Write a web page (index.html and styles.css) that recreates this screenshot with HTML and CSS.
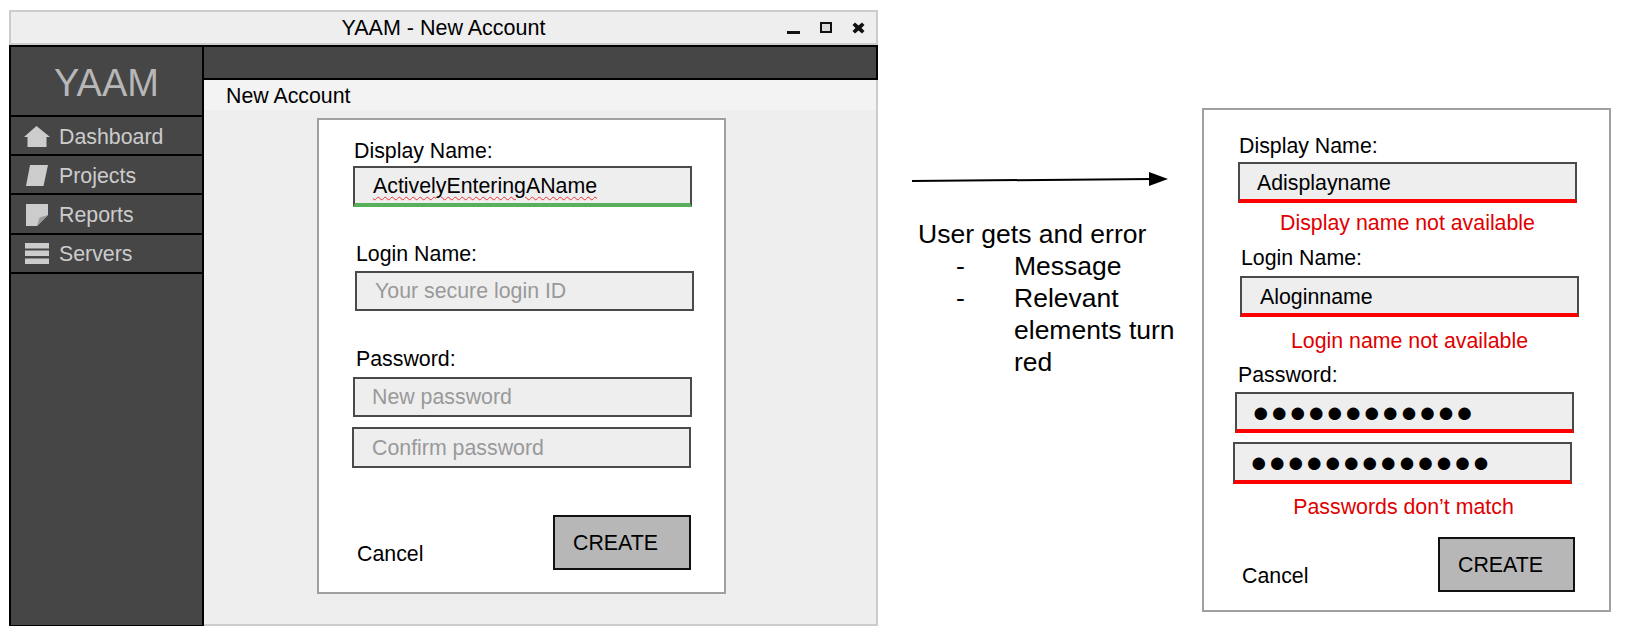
FILE: index.html
```html
<!DOCTYPE html>
<html lang="en">
<head>
  <meta charset="UTF-8">
  <meta name="viewport" content="width=device-width, initial-scale=1.0">
  <title>YAAM - New Account</title>
  <link rel="stylesheet" href="styles.css">
</head>
<body>
  <div class="board">
    <!-- app window -->
    <div class="window">
      <div class="titlebar">
        <span></span>
        <span class="title">YAAM - New Account</span>
        <div class="controls">
          <span class="ctl-min"></span>
          <span class="ctl-max"></span>
          <svg class="ctl-close" width="13" height="12" viewBox="0 0 13 12"><path d="M0.500 3 3 0.500 6.500 3.500 10 0.500 12.500 3 9.500 6 12.500 9 10 11.500 6.500 8.500 3 11.500 0.500 9 3.500 6Z"/></svg>
        </div>
      </div>
      <div class="app">
        <nav class="sidebar">
          <div class="logo">YAAM</div>
          <div class="nav-row">
            <svg class="nav-icon" width="26" height="22" viewBox="0 0 26 22"><path d="M12.500 0 26 11H22.500V21H3.500V11H0Z"/></svg>
            <span>Dashboard</span>
          </div>
          <div class="nav-row">
            <svg class="nav-icon" width="26" height="22" viewBox="0 0 26 22"><path d="M6 0H24L19.500 21H2Z"/></svg>
            <span>Projects</span>
          </div>
          <div class="nav-row">
            <svg class="nav-icon" width="26" height="22" viewBox="0 0 26 22"><path d="M2 0H24V11L13 22H2Z"/><path class="fold" d="M24 11 13 22 15.500 13.500Z"/></svg>
            <span>Reports</span>
          </div>
          <div class="nav-row">
            <svg class="nav-icon" width="26" height="22" viewBox="0 0 26 22"><path d="M1 0H25V5.500H1ZM1 7.500H25V13H1ZM1 15.500H25V21H1Z"/></svg>
            <span>Servers</span>
          </div>
        </nav>
        <main class="main">
          <div class="topbar"></div>
          <div class="subhead">New Account</div>
          <div class="content">
            <form class="card card-new">
              <div class="label l-display">Display Name:</div>
              <div class="field f-display ok"><span class="squiggle">ActivelyEnteringAName</span></div>
              <div class="label l-login">Login Name:</div>
              <div class="field f-login hint">Your secure login ID</div>
              <div class="label l-pass">Password:</div>
              <div class="field f-pass hint">New password</div>
              <div class="field f-confirm hint">Confirm password</div>
              <div class="actions">
                <span class="cancel">Cancel</span>
                <div class="create">CREATE</div>
              </div>
            </form>
          </div>
        </main>
      </div>
    </div>

    <!-- annotation -->
    <div class="note">
      <svg class="arrow" width="257" height="20" viewBox="0 0 257 20"><path class="shaft" d="M0 11 240 9"/><path d="M237 2 256 9 237 16Z"/></svg>
      <p>User gets and error</p>
      <ul>
        <li><span>-</span><span>Message</span></li>
        <li><span>-</span><span>Relevant elements turn red</span></li>
      </ul>
    </div>

    <!-- error state -->
    <form class="card card-error">
      <div class="label e-l-display">Display Name:</div>
      <div class="field bad e-display">Adisplayname</div>
      <div class="error err-display">Display name not available</div>
      <div class="label e-l-login">Login Name:</div>
      <div class="field bad e-login">Aloginname</div>
      <div class="error err-login">Login name not available</div>
      <div class="label e-l-pass">Password:</div>
      <div class="field bad dots e-pass">●●●●●●●●●●●●</div>
      <div class="field bad dots e-confirm">●●●●●●●●●●●●●</div>
      <div class="error err-pass">Passwords don’t match</div>
      <div class="actions">
        <span class="cancel">Cancel</span>
        <div class="create">CREATE</div>
      </div>
    </form>
  </div>
</body>
</html>
```

FILE: styles.css
```css
body {
  margin: 0;
  background-color: #fff;
  color: #000;
  font-family: "Liberation Sans", Arial, sans-serif;
  font-size: 21.33px;
  line-height: 24px;
}
.board {
  display: flex;
  align-items: flex-start;
  width: 1629px;
  height: 638px;
  padding: 10px 18px 0 9px;
  box-sizing: border-box;
  overflow: hidden;
}

/* window */
.window {
  width: 869px;
  height: 616px;
  display: flex;
  flex-direction: column;
  flex: none;
}
.titlebar {
  height: 35px;
  flex: none;
  box-sizing: border-box;
  border: 2px solid #ccc;
  background-color: #eee;
  display: grid;
  grid-template-columns: 1fr auto 1fr;
  align-items: center;
}
.title {
  font-size: 21.5px;
}
.controls {
  display: flex;
  justify-content: flex-end;
  align-items: center;
  gap: 20px;
  padding-right: 11px;
}
.ctl-min {
  width: 13px;
  height: 3px;
  margin-top: 9px;
  background-color: #111;
}
.ctl-max {
  width: 12px;
  height: 11px;
  box-sizing: border-box;
  border: 2px solid #111;
  background-color: #ddd;
}
.ctl-close {
  fill: #111;
}
.app {
  flex: 1;
  display: flex;
  min-height: 0;
}

/* sidebar */
.sidebar {
  width: 195px;
  flex: none;
  box-sizing: border-box;
  border: 2px solid #000;
  border-bottom-width: 1px;
  background-color: #464646;
  color: #ccc;
}
.logo {
  height: 70px;
  box-sizing: border-box;
  border-bottom: 2px solid #000;
  text-align: center;
  font-size: 38px;
  line-height: 72px;
  color: #b7b7b7;
}
.nav-row {
  height: 39.2px;
  box-sizing: border-box;
  border-bottom: 2px solid #000;
  display: flex;
  align-items: center;
  gap: 9px;
  padding: 2px 0 0 13px;
}
.nav-icon {
  fill: #ccc;
}
.nav-icon .fold {
  fill: #999;
}

/* main column */
.main {
  flex: 1;
  display: flex;
  flex-direction: column;
}
.topbar {
  height: 35px;
  flex: none;
  box-sizing: border-box;
  border: 2px solid #000;
  border-left: 0;
  background-color: #464646;
}
.subhead {
  height: 30px;
  flex: none;
  box-sizing: border-box;
  padding-left: 22px;
  border-right: 2px solid #ccc;
  background-color: #f3f3f3;
  line-height: 32px;
}
.content {
  flex: 1;
  box-sizing: border-box;
  padding: 8px 0 0 113px;
  border-right: 2px solid #ccc;
  border-bottom: 2px solid #ccc;
  background-color: #eee;
}

/* form cards */
.card {
  box-sizing: border-box;
  display: block;
  background-color: #fff;
  border: 2px solid #a0a0a0;
}
.card-new {
  width: 409px;
  height: 476px;
  padding: 19px 0 0 34px;
}
.card-error {
  width: 409px;
  height: 504px;
  margin-top: 98px;
  margin-left: auto;
  padding: 24px 0 0 34px;
}
.field {
  width: 339px;
  height: 41px;
  box-sizing: border-box;
  padding: 6px 0 0 18px;
  border: 2px solid #4a4a4a;
  background-color: #eee;
}
.hint {
  color: #999;
}
.ok {
  border-bottom: 4px solid #58b05c;
}
.bad {
  border-bottom: 4px solid #f00;
}
.squiggle {
  text-decoration: underline wavy #e33 1px;
  text-underline-offset: 3px;
}
.dots {
  font-size: 29px;
  letter-spacing: 1px;
  line-height: 28px;
  padding: 4px 0 0 15px;
  white-space: nowrap;
}
.error {
  width: 339px;
  text-align: center;
  color: #e00000;
}

/* first form, the rows do not line up exactly */
.l-display { margin-left: 1px; }
.f-display { margin-top: 3px; }
.l-login { margin: 35px 0 0 3px; }
.f-login { margin: 5px 0 0 2px; height: 40px; padding-left: 18px; }
.l-pass { margin: 36px 0 0 3px; }
.f-pass { margin-top: 6px; height: 40px; padding-left: 17px; }
.f-confirm { margin: 10px 0 0 -1px; padding-top: 7px; }
.card-new .actions { margin-top: 47px; width: 338px; }
.card-new .create { width: 138px; height: 55px; padding-top: 14px; }

/* second form */
.e-l-display { margin-left: 1px; }
.e-display { margin-top: 4px; padding: 7px 0 0 17px; }
.err-display { margin-top: 8px; }
.e-l-login { margin: 11px 0 0 3px; }
.e-login { margin: 6px 0 0 2px; padding-top: 7px; }
.err-login { margin: 12px 0 0 2px; }
.e-l-pass { margin-top: 10px; }
.e-pass { margin: 5px 0 0 -3px; }
.e-confirm { margin: 9px 0 0 -5px; height: 42px; }
.err-pass { margin: 11px 0 0 -4px; }
.card-error .actions { margin-top: 18px; width: 337px; }

.actions {
  display: flex;
  justify-content: space-between;
  align-items: flex-end;
}
.cancel {
  margin: 0 0 4px 4px;
}
.create {
  width: 137px;
  height: 54px;
  box-sizing: border-box;
  padding: 13px 0 0 18px;
  border: 2px solid #111;
  background-color: #b7b7b7;
}
.card-error .cancel { margin: 0 0 4px 4px; }
.card-error .create { height: 55px; padding-top: 14px; }

/* annotation */
.note {
  margin: 160px 0 0 34px;
  font-size: 26.5px;
  line-height: 32px;
}
.arrow {
  display: block;
  margin-bottom: 28px;
}
.arrow .shaft {
  stroke: #000;
  stroke-width: 2;
}
.note p {
  margin: 0 0 0 6px;
}
.note ul {
  list-style: none;
  margin: 0;
  padding: 0 0 0 44px;
  width: 222px;
}
.note li {
  display: grid;
  grid-template-columns: 58px 1fr;
}
```
